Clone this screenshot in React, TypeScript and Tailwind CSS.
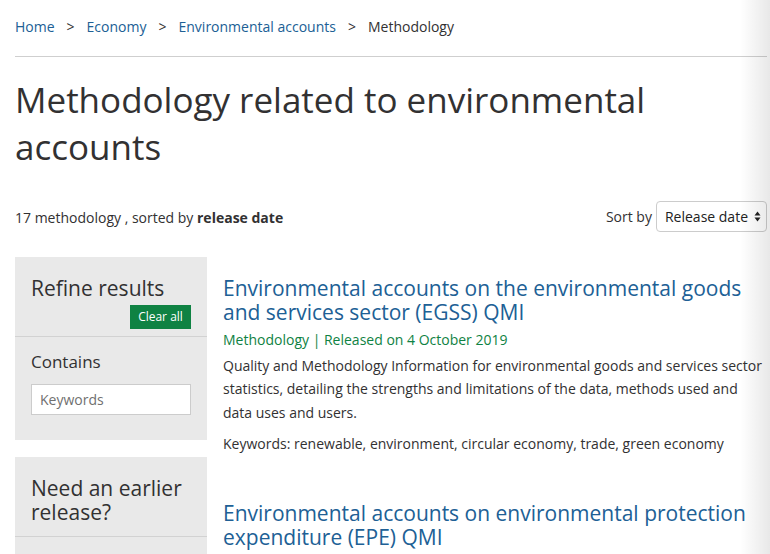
const BLUE = "text-[#206095]";

const crumbs = ["Home", "Economy", "Environmental accounts"];

const results = [
  {
    title: "Environmental accounts on the environmental goods and services sector (EGSS) QMI",
    released: "4 October 2019",
    summary:
      "Quality and Methodology Information for environmental goods and services sector statistics, detailing the strengths and limitations of the data, methods used and data uses and users.",
    keywords: "renewable, environment, circular economy, trade, green economy",
  },
  {
    title: "Environmental accounts on environmental protection expenditure (EPE) QMI",
    released: "7 June 2019",
    summary:
      "Quality and Methodology Information for environmental protection expenditure statistics, detailing the strengths and limitations of the data, methods used and data uses and users.",
    keywords: "environmental protection, expenditure, government, industry",
  },
];

function SortArrows() {
  return (
    <svg width="7" height="11" viewBox="0 0 7 11" className="shrink-0">
      <path d="M3.5 0.5 L6.5 4.5 L0.5 4.5 Z" fill="#222" />
      <path d="M3.5 10.5 L6.5 6.5 L0.5 6.5 Z" fill="#222" />
    </svg>
  );
}

export default function App() {
  return (
    <div
      className="relative w-[770px] h-[554px] overflow-hidden bg-white text-[#323132]"
      style={{ fontFamily: '"Open Sans", "Liberation Sans", sans-serif' }}
    >
      <div className="ml-[15px] w-[752px]">
        {/* Breadcrumb */}
        <nav className="pt-[17px] flex items-center text-[14px] leading-[20px]">
          {crumbs.map((c) => (
            <span key={c} className="flex items-center">
              <a className={`${BLUE}`}>{c}</a>
              <span className="mx-[12px] text-[#323132]">&gt;</span>
            </span>
          ))}
          <span>Methodology</span>
        </nav>
        <div className="mt-[19px] h-px bg-[#cfcfcf]" />

        <h1 className="mt-[19px] text-[35px] leading-[47px] font-normal text-[#323132]">
          Methodology related to environmental accounts
        </h1>

        {/* Count + sort */}
        <div className="mt-[31px] flex items-center justify-between h-[31px]">
          <p className="text-[14px] leading-[20px] mt-[3px]">
            17 methodology , sorted by <span className="font-bold">release date</span>
          </p>
          <div className="flex items-center gap-[4px] text-[14px] whitespace-nowrap">
            <span>Sort by</span>
            <div className="flex items-center gap-[6px] h-[31px] border border-[#cccccc] rounded-[4px] pl-[8px] pr-[5px] text-[#222]">
              <span>Release date</span>
              <SortArrows />
            </div>
          </div>
        </div>

        {/* Body */}
        <div className="mt-[25px] flex gap-[16px]">
          <aside className="w-[192px] shrink-0 flex flex-col gap-[17px]">
            <div className="bg-[#e9e9e9]">
              <div className="px-[16px] pt-[19px] pb-[7px] flex flex-col">
                <h2 className="text-[21px] leading-[24px] font-normal">Refine results</h2>
                <button className="self-end mt-[5px] h-[24px] w-[61px] bg-[#0f8243] text-white text-[12px] leading-[24px]">
                  Clear all
                </button>
              </div>
              <div className="h-px bg-[#d2d2d2]" />
              <div className="px-[16px] pt-[13px] pb-[25px]">
                <h3 className="text-[17px] leading-[24px] font-normal">Contains</h3>
                <div className="mt-[10px] h-[31px] bg-white border border-[#cccccc] px-[8px] flex items-center text-[14px] text-[#707070]">
                  Keywords
                </div>
              </div>
            </div>
            <div className="bg-[#e9e9e9]">
              <div className="px-[16px] pt-[19px] pb-[12px]">
                <h2 className="text-[21px] leading-[24px] font-normal">Need an earlier release?</h2>
              </div>
              <div className="h-px bg-[#d2d2d2]" />
              <div className="h-[60px]" />
            </div>
          </aside>

          <ul className="flex-1 pt-[19px] flex flex-col gap-[46px]">
            {results.map((r) => (
              <li key={r.title}>
                <a className={`block text-[21px] leading-[24px] ${BLUE}`}>{r.title}</a>
                <p className="mt-[6px] text-[14px] leading-[20px] text-[#0f8243]">
                  Methodology | Released on {r.released}
                </p>
                <p className="mt-[4px] text-[14px] leading-[23.33px]">{r.summary}</p>
                <p className="mt-[8px] text-[14px] leading-[23.33px]">Keywords: {r.keywords}</p>
              </li>
            ))}
          </ul>
        </div>
      </div>

      {/* right edge shade */}
      <div className="pointer-events-none absolute right-0 top-0 h-full w-[30px] bg-linear-to-r from-transparent to-[rgba(0,0,0,0.09)]" />
    </div>
  );
}
